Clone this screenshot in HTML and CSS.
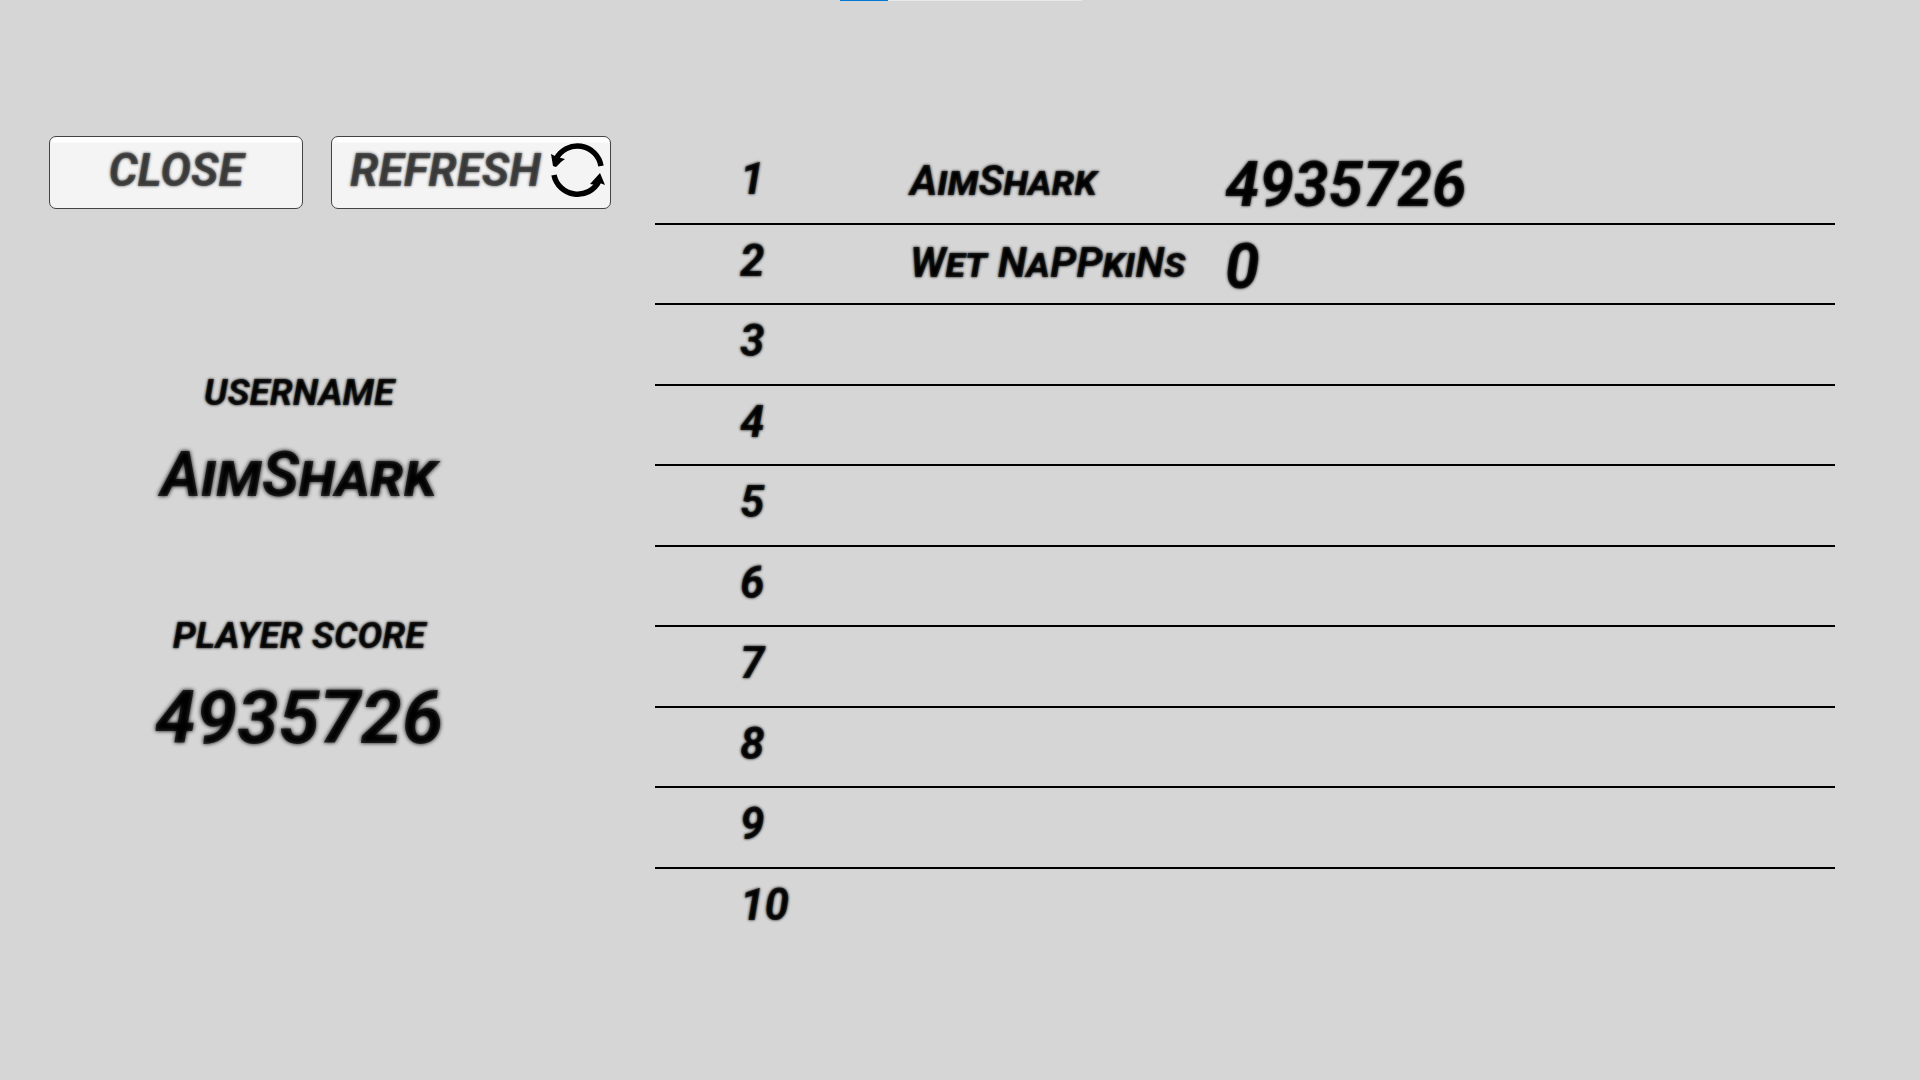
FILE: index.html
```
<!DOCTYPE html>
<html lang="en">

<head>
    <meta charset="utf-8">
    <title>Leaderboard</title>
    <link rel="stylesheet" href="styles.css">
</head>

<body>
    <div class="handle"><div class="handle-fill"></div></div>
    <main class="screen">
        <section class="side">
            <div class="buttons">
                <button type="button" class="btn btn-close">CLOSE</button>
                <button type="button" class="btn btn-refresh">
                    <span>REFRESH</span>
                    <svg class="icon" viewBox="0 0 54 56" aria-hidden="true">
                        <path d="M5 17 A24 24 0 0 1 50 24" fill="none" stroke="#000" stroke-width="5.5"/>
                        <path d="M3 33 A24 24 0 0 0 48 39" fill="none" stroke="#000" stroke-width="5.5"/>
                        <path d="M0 12 L6 15 L14 17 L10 20 L5 25 L2 24 Z"/>
                        <path d="M49 31 L54 43 L49 41 L45 43 L39 42 Z"/>
                    </svg>
                </button>
            </div>
            <dl class="player">
                <dt>USERNAME</dt>
                <dd class="player-name">AimShark</dd>
                <dt>PLAYER SCORE</dt>
                <dd class="player-score">4935726</dd>
            </dl>
        </section>
        <table class="board">
            <tbody>
                <tr><td class="rank">1</td><td class="name">AimShark</td><td class="score">4935726</td></tr>
                <tr><td class="rank">2</td><td class="name">Wet NaPPkiNs</td><td class="score">0</td></tr>
                <tr><td class="rank">3</td><td class="name"></td><td class="score"></td></tr>
                <tr><td class="rank">4</td><td class="name"></td><td class="score"></td></tr>
                <tr><td class="rank">5</td><td class="name"></td><td class="score"></td></tr>
                <tr><td class="rank">6</td><td class="name"></td><td class="score"></td></tr>
                <tr><td class="rank">7</td><td class="name"></td><td class="score"></td></tr>
                <tr><td class="rank">8</td><td class="name"></td><td class="score"></td></tr>
                <tr><td class="rank">9</td><td class="name"></td><td class="score"></td></tr>
                <tr><td class="rank">10</td><td class="name"></td><td class="score"></td></tr>
            </tbody>
        </table>
    </main>
</body>

</html>
```
FILE: styles.css
```
* {
    box-sizing: border-box;
}

body {
    margin: 0;
    background: #d6d6d6;
    color: rgba(0, 0, 0, 0.7);
    font-family: Roboto, "Liberation Sans", sans-serif;
    font-weight: 700;
    font-style: italic;
}

/* thin strip on the top edge */
.handle {
    position: absolute;
    top: 0;
    left: 50%;
    width: 242px;
    height: 1px;
    margin-left: -120px;
    background: #e8e8e8;
}

.handle-fill {
    width: 20%;
    height: 1px;
    background: #0078d7;
}

.screen {
    display: flex;
    align-items: flex-start;
    gap: 44px;
    padding: 136px 85px 0 49px;
}

.side {
    flex: none;
}

.buttons {
    display: flex;
    gap: 28px;
}

.btn {
    height: 73px;
    padding: 0 0 6px;
    border: 1px solid #444;
    border-radius: 7px;
    background: linear-gradient(#fff 5px, #f4f4f4 6px);
    color: rgba(50, 50, 50, 0.7);
    font: inherit;
    font-size: 46px;
    line-height: 56px;
    text-shadow: 0 0 3px #444;
    cursor: pointer;
}

.btn-close {
    width: 254px;
}

.btn-refresh {
    display: flex;
    align-items: center;
    justify-content: space-between;
    width: 280px;
    padding: 0 5px 6px 18px;
}

.icon {
    width: 54px;
    height: 56px;
}

.player {
    width: 500px;
    margin: 154px 0 0;
    text-align: center;
}

.player dt {
    font-size: 37px;
    line-height: 60px;
    text-shadow: 0 0 3px #000;
}

.player dd {
    margin: 0;
    line-height: 104px;
    text-shadow: 0 0 4px #000;
}

.player-name {
    font-size: 62px;
    font-variant: small-caps;
}

.player .player-name {
    margin-bottom: 79px;
}

.player-score {
    font-size: 74px;
}

.board {
    flex: 1;
    margin-top: 7px;
    border-collapse: collapse;
    table-layout: fixed;
}

.board tr {
    height: 81px;
}

.board tr:nth-child(even) {
    height: 80px;
}

.board td {
    padding: 8px 0 0;
    border-bottom: 2px solid #000;
    line-height: 60px;
    white-space: nowrap;
    vertical-align: top;
    text-shadow: 0 0 3px #000;
}

.board tr:last-child td {
    border-bottom: none;
}

.board .rank {
    width: 255px;
    padding-top: 6px;
    padding-left: 85px;
    font-size: 44px;
}

.name {
    width: 315px;
    font-size: 42px;
    font-variant: small-caps;
}

.board .score {
    padding-top: 12px;
    font-size: 62px;
}
```
